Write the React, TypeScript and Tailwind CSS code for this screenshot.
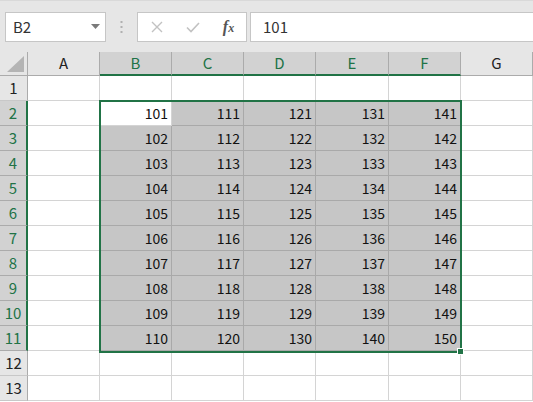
import React from "react";

const cols = ["A", "B", "C", "D", "E", "F", "G"];
const widths = ["w-[72px]", "w-[72px]", "w-[72px]", "w-[72px]", "w-[73px]", "w-[72px]", "w-[72px]"];

function value(r: number, c: number): string {
  return String(100 + (c - 1) * 10 + (r - 1));
}

export default function App() {
  const rows = Array.from({ length: 13 }, (_, i) => i + 1);
  return (
    <div
      className="relative w-[533px] h-[402px] overflow-hidden bg-white text-[#222]"
      style={{ fontFamily: '"Noto Sans CJK JP", "Noto Sans", sans-serif' }}
    >
      {/* toolbar */}
      <div className="flex h-[52px] items-start bg-[#e6e6e6] pt-[11px] border-t border-[#d9d9d9]">
        <div className="ml-[5px] flex h-[30px] w-[101px] items-center justify-between border border-[#c6c6c6] bg-white pl-[7px] pr-[5px]">
          <span className="text-[15px] text-[#333]">B2</span>
          <svg width="9" height="6" viewBox="0 0 9 6">
            <path d="M0 0 L9 0 L4.5 5 Z" fill="#7a7a7a" />
          </svg>
        </div>
        <div className="flex h-[30px] w-[31px] items-center justify-center">
          <svg width="3" height="12" viewBox="0 0 3 12">
            <rect x="0.5" y="0" width="2" height="2" fill="#b0b0b0" />
            <rect x="0.5" y="5" width="2" height="2" fill="#b0b0b0" />
            <rect x="0.5" y="10" width="2" height="2" fill="#b0b0b0" />
          </svg>
        </div>
        <div className="flex h-[30px] w-[110px] items-center border border-[#c6c6c6] bg-white">
          <div className="flex w-[37px] justify-center pl-[1px]">
            <svg width="12" height="12" viewBox="0 0 12 12">
              <path d="M1 1 L11 11 M11 1 L1 11" stroke="#c2c2c2" strokeWidth="1.4" />
            </svg>
          </div>
          <div className="flex w-[36px] justify-center">
            <svg width="14" height="11" viewBox="0 0 14 11">
              <path d="M1 5.5 L5 9.5 L13 1" stroke="#c2c2c2" strokeWidth="1.6" fill="none" />
            </svg>
          </div>
          <div className="flex w-[35px] justify-center">
            <span
              className="text-[16px] italic leading-none text-[#555]"
              style={{ fontFamily: '"Liberation Serif", serif' }}
            >
              <span className="font-bold">f</span>
              <span className="text-[12px] font-bold">x</span>
            </span>
          </div>
        </div>
        <div className="ml-[3px] flex h-[30px] flex-1 items-center border border-r-0 border-[#c6c6c6] bg-white pl-[12px]">
          <span className="text-[15px] text-[#333]">101</span>
        </div>
      </div>

      {/* column headers */}
      <div className="flex h-[24px]">
        <div className="relative h-[24px] w-[28px] border-r border-b border-[#ababab] bg-[#e6e6e6]">
          <svg className="absolute right-[3px] bottom-[3px]" width="17" height="16" viewBox="0 0 17 16">
            <path d="M17 0 L17 16 L0 16 Z" fill="#b4b4b4" />
          </svg>
        </div>
        {cols.map((c, i) => {
          const sel = i >= 1 && i <= 5;
          return (
            <div
              key={c}
              className={`${widths[i]} flex h-[24px] items-center justify-center border-r text-[15px] ${
                sel
                  ? "border-[#ababab] border-b-2 border-b-[#217346] bg-[#d2d2d2] text-[#217346]"
                  : "border-[#ababab] border-b border-b-[#ababab] bg-[#e6e6e6] text-[#222]"
              }`}
            >
              {c}
            </div>
          );
        })}
      </div>

      {/* rows */}
      {rows.map((r) => {
        const selRow = r >= 2 && r <= 11;
        return (
          <div key={r} className="flex h-[25px]">
            <div
              className={`flex h-[25px] w-[28px] items-center justify-center border-b text-[15px] ${
                selRow
                  ? "border-r-2 border-r-[#217346] border-b-[#ababab] bg-[#d2d2d2] text-[#217346]"
                  : "border-r border-r-[#ababab] border-b-[#c8c8c8] bg-[#e6e6e6] text-[#222]"
              }`}
            >
              {r}
            </div>
            {cols.map((c, i) => {
              const inSel = selRow && i >= 1 && i <= 5;
              const active = r === 2 && i === 1;
              const bg = inSel && !active ? "bg-[#c6c6c6] border-[#a9a9a9]" : "bg-white border-[#d4d4d4]";
              return (
                <div
                  key={c}
                  className={`${widths[i]} flex h-[25px] items-center justify-end border-r border-b pr-[3px] text-[14px] text-[#111] ${bg}`}
                >
                  {inSel ? value(r, i) : ""}
                </div>
              );
            })}
          </div>
        );
      })}

      {/* selection outline */}
      <div className="pointer-events-none absolute left-[99px] top-[100px] h-[253px] w-[363px] border-2 border-[#217346]" />
      {/* fill handle */}
      <div className="pointer-events-none absolute left-[457px] top-[348px] h-[7px] w-[7px] border border-white bg-[#217346]" />
    </div>
  );
}
